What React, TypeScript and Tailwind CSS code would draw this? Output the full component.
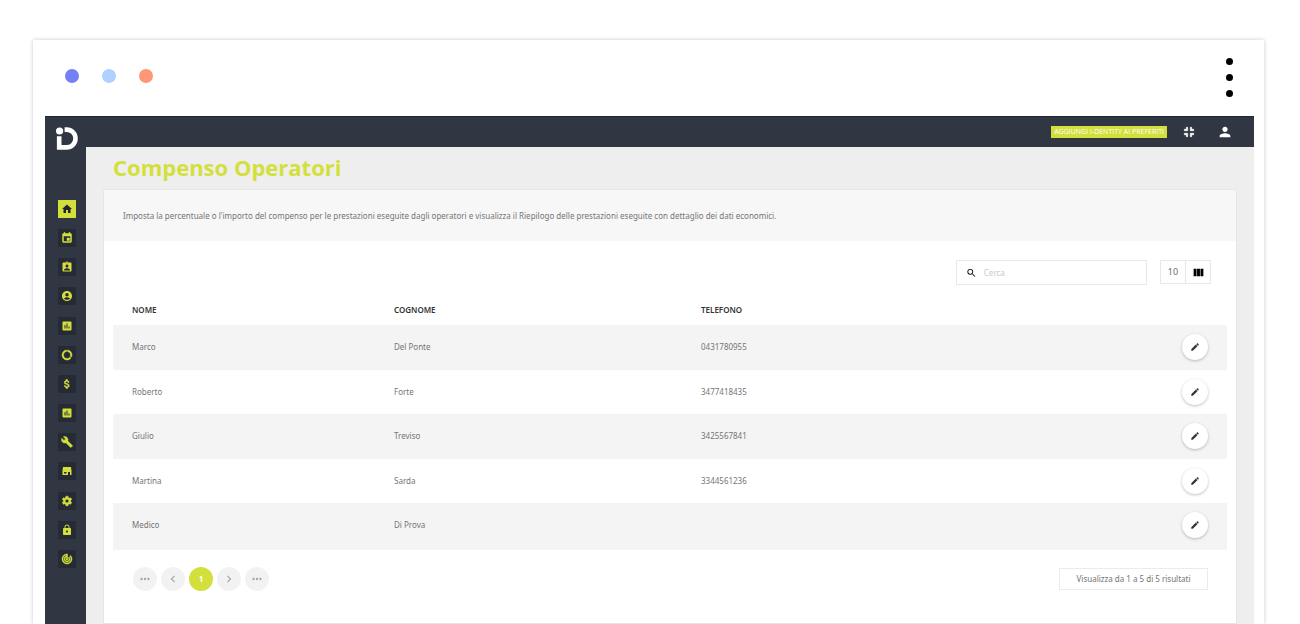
import {
  MdAccountCircle,
  MdAssessment,
  MdAssignmentInd,
  MdAttachMoney,
  MdBuild,
  MdChevronLeft,
  MdChevronRight,
  MdDataUsage,
  MdEdit,
  MdEvent,
  MdFullscreenExit,
  MdHome,
  MdLock,
  MdMoreHoriz,
  MdPerson,
  MdSearch,
  MdSettings,
  MdTrackChanges,
  MdViewColumn,
} from 'react-icons/md'

function StoreIcon({ size, className }: { size: number; className?: string }) {
  return (
    <svg width={size} height={size} viewBox="0 0 24 24" fill="currentColor" className={className}>
      <path d="M4 4h16l1 7v9h-3v-6h-4v6H3v-9zM6 14v3h5v-3z" fillRule="evenodd" />
    </svg>
  )
}

// the md icons carry an empty bounding path that must stay unstroked
const boldIcon = 'stroke-1 [&_path[fill=none]]:stroke-none'

const navItems = [
  { icon: MdHome, label: 'Home' },
  { icon: MdEvent, label: 'Agenda', bold: true },
  { icon: MdAssignmentInd, label: 'Pazienti' },
  { icon: MdAccountCircle, label: 'Operatori' },
  { icon: MdAssessment, label: 'Statistiche' },
  { icon: MdDataUsage, label: 'Consumi', bold: true },
  { icon: MdAttachMoney, label: 'Fatturazione', bold: true },
  { icon: MdAssessment, label: 'Report' },
  { icon: MdBuild, label: 'Strumenti', bold: true },
  { icon: StoreIcon, label: 'Magazzino' },
  { icon: MdSettings, label: 'Impostazioni', bold: true },
  { icon: MdLock, label: 'Sicurezza' },
  { icon: MdTrackChanges, label: 'Attività', bold: true },
]

const operators = [
  { nome: 'Marco', cognome: 'Del Ponte', telefono: '0431780955' },
  { nome: 'Roberto', cognome: 'Forte', telefono: '3477418435' },
  { nome: 'Giulio', cognome: 'Treviso', telefono: '3425567841' },
  { nome: 'Martina', cognome: 'Sarda', telefono: '3344561236' },
  { nome: 'Medico', cognome: 'Di Prova', telefono: '' },
]

function Logo() {
  return (
    <svg width="22" height="23" viewBox="0 0 22 23" fill="none" aria-label="i-dentity">
      <circle cx="3.6" cy="4" r="3.6" fill="#fff" />
      <path d="M3.2 9.2V20.4H10.6A8.9 8.9 0 0 0 10.6 2.6H8.6" stroke="#fff" strokeWidth="4.6" />
    </svg>
  )
}

function Sidebar() {
  return (
    <aside className="w-[41px] shrink-0 bg-[#313742]">
      <nav className="mt-[53px] flex h-[368px] flex-col items-center justify-between pl-0.5">
        {navItems.map((item, i) => {
          const Icon = item.icon
          return (
            <a
              key={item.label}
              href="#"
              aria-label={item.label}
              className={`flex size-[18px] items-center justify-center ${
                i === 0 ? 'bg-[#d3e03c] text-[#1f2430]' : 'bg-[#252a34] text-[#d3e03c]'
              }`}
            >
              <Icon size={12} className={item.bold ? boldIcon : 'stroke-0'} />
            </a>
          )
        })}
      </nav>
    </aside>
  )
}

function Toolbar() {
  return (
    <div className="flex items-start justify-end gap-[13px] pt-[19px] pr-[25px]">
      <div className="flex h-[25px] w-[191px] items-center border border-[#e8e8e8] pl-[9px]">
        <MdSearch size={12} className="text-black" />
        <input
          type="text"
          aria-label="Cerca"
          placeholder="Cerca"
          className="ml-[7px] w-full min-w-0 text-[8px] outline-none placeholder:text-[#c9c9c9]"
        />
      </div>
      <div className="flex h-6 divide-x divide-[#e8e8e8] border border-[#e8e8e8]">
        <button className="w-[25px] text-[9px] text-[#6b6b6b]">10</button>
        <button aria-label="Colonne" className="flex w-6 items-center justify-center text-black">
          <MdViewColumn size={13} />
        </button>
      </div>
    </div>
  )
}

function OperatorsTable() {
  return (
    <table className="w-full text-left text-[8px]">
      <thead>
        <tr className="h-[31px] text-[#333]">
          <th className="w-[262px] px-[19px] font-semibold">NOME</th>
          <th className="w-[307px] px-[19px] font-semibold">COGNOME</th>
          <th className="px-[19px] font-semibold">TELEFONO</th>
          <th className="w-16" aria-label="Modifica" />
        </tr>
      </thead>
      <tbody className="text-[#757575]">
        {operators.map((op) => (
          <tr
            key={op.nome}
            className="h-[45px] *:pb-0.5 last:h-[47px] odd:bg-[#f4f4f4] even:h-11 even:*:pb-0 last:*:pb-[3px]"
          >
            <td className="px-[19px]">{op.nome}</td>
            <td className="px-[19px]">{op.cognome}</td>
            <td className="px-[19px]">{op.telefono}</td>
            <td>
              <button
                aria-label={`Modifica ${op.nome}`}
                className="mr-[19px] ml-auto flex size-[26px] items-center justify-center rounded-full bg-white text-[#333] shadow-[0_1px_3px_rgba(0,0,0,0.25)]"
              >
                <MdEdit size={10} />
              </button>
            </td>
          </tr>
        ))}
      </tbody>
    </table>
  )
}

function Pagination() {
  const btn = 'flex size-6 items-center justify-center rounded-full bg-[#f2f2f2] text-[#a5a5a5]'
  return (
    <div className="flex items-center justify-between pt-[17px] pr-7 pb-8 pl-[29px]">
      <div className="flex gap-1">
        <button aria-label="Prima pagina" className={btn}>
          <MdMoreHoriz size={14} />
        </button>
        <button aria-label="Pagina precedente" className={btn}>
          <MdChevronLeft size={14} />
        </button>
        <button className="size-6 rounded-full bg-[#d3e03c] text-[8px] font-bold text-white">1</button>
        <button aria-label="Pagina successiva" className={btn}>
          <MdChevronRight size={14} />
        </button>
        <button aria-label="Ultima pagina" className={btn}>
          <MdMoreHoriz size={14} />
        </button>
      </div>
      <div className="flex h-[22px] w-[149px] items-center justify-center border border-[#ebebeb] text-[8px] text-[#757575]">
        Visualizza da 1 a 5 di 5 risultati
      </div>
    </div>
  )
}

export default function App() {
  return (
    <div className="flex h-screen flex-col overflow-hidden bg-white pt-10 pr-9 pl-[33px] font-['Noto_Sans',sans-serif]">
      <div className="flex flex-1 flex-col bg-white shadow-[0_0_4px_rgba(0,0,0,0.22)]">
        {/* Window bar */}
        <div className="flex h-[76px] shrink-0 items-center justify-between pr-[31px] pb-1 pl-8">
          <div className="flex gap-[23px]">
            <span className="size-3.5 rounded-full bg-[#7580f5]" />
            <span className="size-3.5 rounded-full bg-[#b0d0ff]" />
            <span className="size-3.5 rounded-full bg-[#ff9678]" />
          </div>
          <div className="flex flex-col gap-[9px] pt-0.5">
            <span className="size-[7px] rounded-full bg-black" />
            <span className="size-[7px] rounded-full bg-black" />
            <span className="size-[7px] rounded-full bg-black" />
          </div>
        </div>

        <div className="mr-2.5 ml-3 flex flex-1 flex-col">
          {/* Top bar */}
          <header className="flex h-[31px] shrink-0 items-start justify-between border-t border-[#20263a] bg-[#313742] pr-[21px] pl-[11px]">
            <a href="#" className="relative z-10 mt-2.5 h-[23px]">
              <Logo />
            </a>
            <div className="flex h-full items-center text-white">
              <button className="mr-3.5 h-3 bg-[#d3e03c] px-[3px] font-['Open_Sans',sans-serif] text-[7px] leading-3 font-medium">
                AGGIUNGI I-DENTITY AI PREFERITI
              </button>
              <button aria-label="Esci da schermo intero" className="mr-5">
                <MdFullscreenExit size={16} className={boldIcon} />
              </button>
              <button aria-label="Profilo">
                <MdPerson size={16} />
              </button>
            </div>
          </header>

          <div className="flex flex-1">
            <Sidebar />
            <main className="min-w-0 flex-1 bg-[#eee] px-[18px]">
              <h1 className="pt-1.5 pb-[9px] pl-[9px] font-['Open_Sans',sans-serif] text-[22px] leading-7 font-bold text-[#d3e03c]">
                Compenso Operatori
              </h1>
              <section className="border-b border-[#e4e4e4] bg-white shadow-[0_0_1px_rgba(0,0,0,0.2)]">
                <p className="bg-[#f7f7f7] px-[19px] py-[18px] text-[8px] leading-[15px] text-[#757575]">
                  Imposta la percentuale o l'importo del compenso per le prestazioni eseguite dagli operatori e
                  visualizza il Riepilogo delle prestazioni eseguite con dettaglio dei dati economici.
                </p>
                <Toolbar />
                <div className="px-[9px] pt-[9px]">
                  <OperatorsTable />
                </div>
                <Pagination />
              </section>
            </main>
          </div>
        </div>
      </div>
    </div>
  )
}
